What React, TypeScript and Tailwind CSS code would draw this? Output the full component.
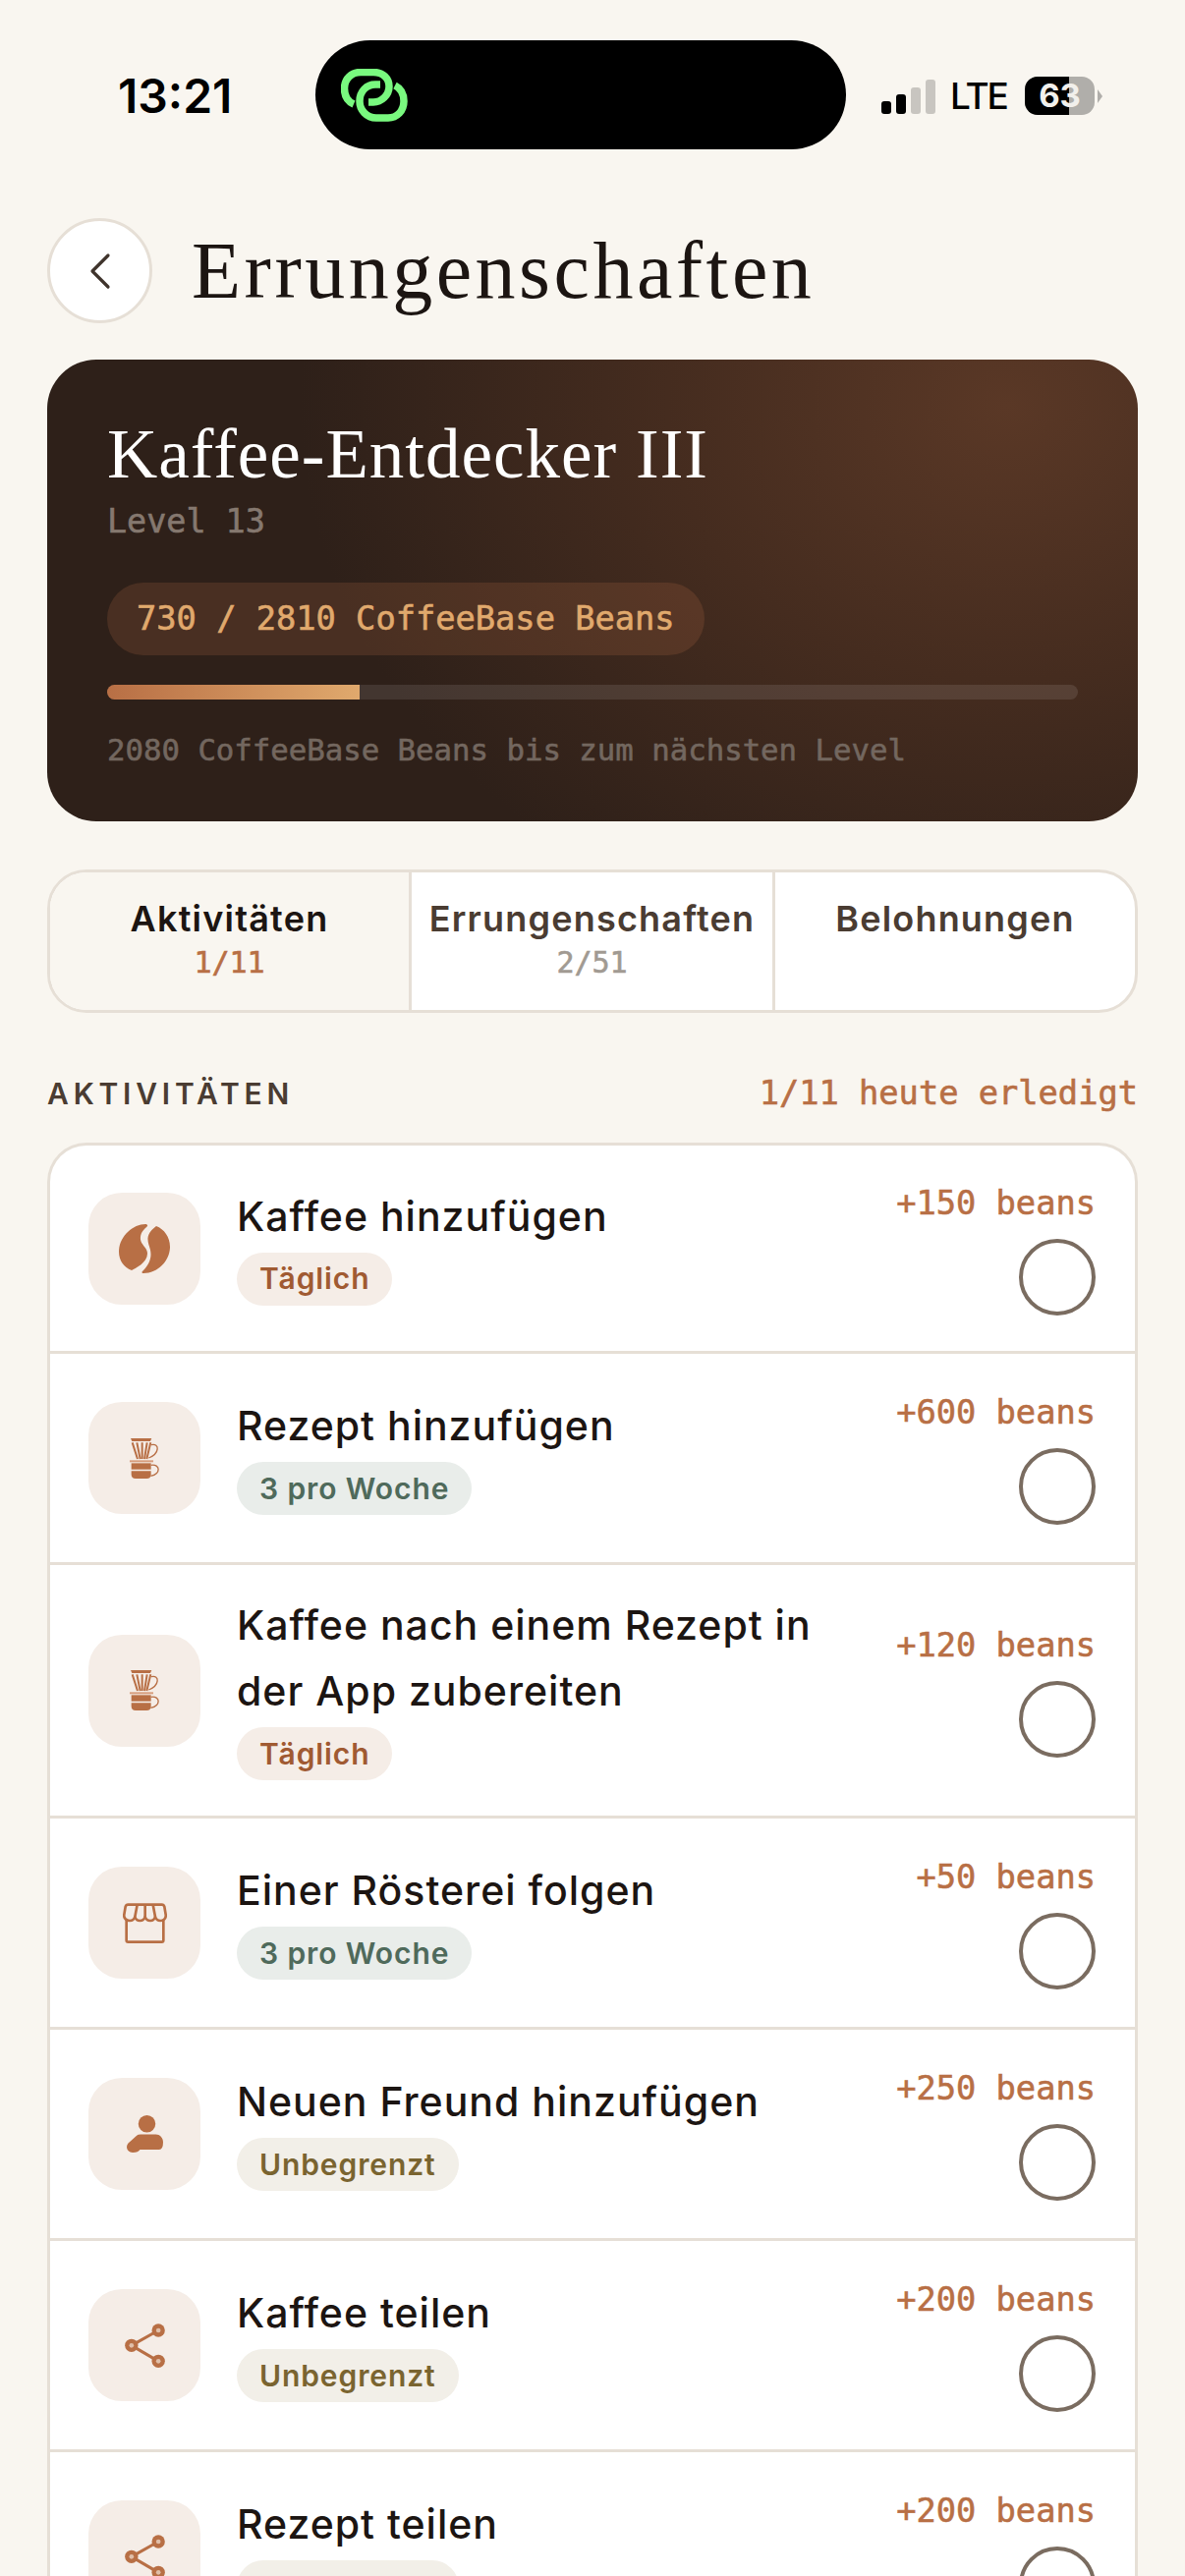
import { ChevronLeft } from 'lucide-react';
import type { ReactNode } from 'react';

const mono = "font-['DejaVu_Sans_Mono','Liberation_Mono',monospace] [-webkit-text-stroke:0.6px]";

const BeanIcon = () => (
  <svg width="52" height="52" viewBox="0 0 52 52" fill="#b86f45">
    <path d="M27 1C14 1 0 14 0 29C0 38 5 45 13 48C17 46 29 40 29 31C29 24 21 22 22 14C22.500 9 26 6 29 3C29.500 2 28.500 1 27 1Z" />
    <path d="M38 3C46 6 52 14 52 24C52 38 40 51 25 51C23.500 51 23 50 24 49C28 45 32.500 39 32.500 32C32.500 25 29 21 29.500 15C30 10 34 6 38 3Z" />
  </svg>
);

const CupIcon = () => (
  <svg width="30" height="41" viewBox="0 0 90 123" fill="none" stroke="#b86f45">
    <path d="M3 0H67L63 9H7Z" fill="#b86f45" stroke="none" />
    <path d="M8 13L24 63M22 13L32 63M38 13L38 63M53 13L45 63M64 13L52 63" strokeWidth="6" />
    <path d="M66 20C92 14 92 46 58 60" strokeWidth="4" />
    <rect x="0" y="67" width="72" height="6" fill="#d79d7d" stroke="none" />
    <path d="M5 76H65V95H5Z" fill="#b86f45" stroke="none" />
    <path d="M5 100H65V110C65 118 60 123 52 123H18C10 123 5 118 5 110Z" fill="#b86f45" stroke="none" />
    <path d="M65 82C94 78 96 108 64 115" strokeWidth="4" />
  </svg>
);

const StoreIcon = () => (
  <svg width="45" height="41" viewBox="0 0 135 123" fill="none" stroke="#b86f45" strokeWidth="8" strokeLinejoin="round">
    <path d="M11 50V114Q11 119 16 119H119Q124 119 124 114V50" />
    <path d="M16 5H119Q125 5 127 11L131 35C133 47 124 54 115 54C107 54 101 49 99 42C97 49 91 54 84 54C76 54 70 49 68 42C66 49 60 54 52 54C45 54 39 49 37 42C35 49 29 54 21 54C11 54 2 46 4 35L8 11Q10 5 16 5Z" />
    <path d="M44 5L37 42M68 5V42M92 5L99 42" />
  </svg>
);

const PersonIcon = () => (
  <svg width="37" height="38" viewBox="0 0 110 113" fill="#b86f45">
    <circle cx="61" cy="26" r="26" />
    <path d="M30 62Q34 58 42 58H88C100 58 110 68 110 82Q110 104 98 104H40C36 110 30 113 18 113C8 113 0 105 0 96C0 88 6 82 12 78Z" />
  </svg>
);

const ShareIcon = () => (
  <svg width="41" height="45" viewBox="0 0 122 135" fill="#b86f45" stroke="none">
    <path d="M20 67L102 21M20 67L102 115" stroke="#b86f45" strokeWidth="9" />
    <circle cx="20" cy="67" r="20" />
    <circle cx="102" cy="21" r="20" />
    <circle cx="102" cy="115" r="20" />
    <circle cx="20" cy="67" r="7" fill="#e0bfa9" />
    <circle cx="102" cy="21" r="7" fill="#e0bfa9" />
    <circle cx="102" cy="115" r="7" fill="#e0bfa9" />
  </svg>
);

const LinkIcon = () => (
  <svg width="68" height="54" viewBox="0 0 68 54" fill="none" stroke="#79f97f" strokeWidth="7.500">
    <path d="M13 36C6 33 3.500 27 3.500 20C3.500 10 11 3.500 20 3.500H33C43 3.500 49 10 49 18C49 27 41 34 33 34H28" />
    <path d="M40 16H35C26 16 19 23 19 33C19 42 26 50 36 50H48C57 50 64 43 64 33C64 26 61 20 55 17" />
  </svg>
);

function Badge({ kind }: { kind: 'daily' | 'week' | 'free' }) {
  if (kind === 'daily') {
    return (
      <span className="w-fit h-[54px] flex items-center rounded-full bg-[#f5ede7] px-[23px] text-[30px] font-semibold tracking-[0.900px] text-[#a05a32]">
        Täglich
      </span>
    );
  }
  if (kind === 'week') {
    return (
      <span className="w-fit h-[54px] flex items-center rounded-full bg-[#e9edea] px-[23px] text-[30px] font-semibold tracking-[0.900px] text-[#4f6a5b]">
        3 pro Woche
      </span>
    );
  }
  return (
    <span className="w-fit h-[54px] flex items-center rounded-full bg-[#f2efe8] px-[23px] text-[30px] font-semibold tracking-[0.900px] text-[#7a6430]">
      Unbegrenzt
    </span>
  );
}

function Row({
  icon,
  title,
  beans,
  badge,
  rowClass,
}: {
  icon: ReactNode;
  title: ReactNode;
  beans: string;
  badge: 'daily' | 'week' | 'free';
  rowClass: string;
}) {
  return (
    <div className={`flex items-center border-b-[3px] border-[#e6dfd6] pl-[39px] pr-10 ${rowClass}`}>
      <div className="w-[114px] h-[114px] shrink-0 rounded-[34px] bg-[#f5ede7] flex items-center justify-center">
        {icon}
      </div>
      <div className="ml-[37px] flex-1 flex flex-col pb-[8px]">
        <div className="text-[41px] leading-[67px] tracking-[1px] font-medium text-[#1c1512]">{title}</div>
        <div className="mt-[3px]">
          <Badge kind={badge} />
        </div>
      </div>
      <div className="self-stretch flex flex-col items-end justify-center">
        <div className={`${mono} text-[33.700px] leading-[44px] text-[#b86f45]`}>{beans}</div>
        <div className="mt-[14px] w-[78px] h-[78px] rounded-full border-[4px] border-[#7a6c60]" />
      </div>
    </div>
  );
}

export default function App() {
  return (
    <div className="w-[1206px] h-[2622px] overflow-hidden bg-[#f9f6f0] font-['Inter',sans-serif]">
      {/* status bar */}
      <div className="h-[152px] pt-[41px] flex items-start">
        <div className="w-[321px] h-[111px] flex items-center pl-[120px] pt-[2px] text-[48px] font-semibold text-black">13:21</div>
        <div className="w-[540px] h-[111px] rounded-[56px] bg-black flex items-center pl-[26px]">
          <LinkIcon />
        </div>
        <div className="h-[111px] flex items-center pl-[36px] pt-[2px]">
          <div className="flex items-end gap-[5px] h-[36px]">
            <div className="w-[10px] h-[13px] rounded-[3px] bg-black" />
            <div className="w-[10px] h-[20px] rounded-[3px] bg-black" />
            <div className="w-[10px] h-[27px] rounded-[3px] bg-[#c8c5c0]" />
            <div className="w-[10px] h-[35px] rounded-[3px] bg-[#c8c5c0]" />
          </div>
          <span className="ml-[15px] w-[76px] text-[37px] leading-none tracking-[-2px] font-medium text-black">LTE</span>
          <div className="relative w-[71px] h-[39px] rounded-[13px] overflow-hidden bg-[#b0aeaa] flex items-center justify-center">
            <div className="absolute inset-y-0 left-0 w-[45px] bg-black" />
            <span className="relative text-[33px] leading-none font-bold text-[#f2f0ec]">63</span>
          </div>
          <div className="ml-[3px] w-0 h-0 border-y-[7px] border-y-transparent border-l-[5px] border-l-[#b0aeaa]" />
        </div>
      </div>

      <div className="px-[48px]">
        {/* header */}
        <div className="mt-[70px] flex items-center h-[107px]">
          <button className="w-[107px] h-[107px] rounded-full bg-white border-[3px] border-[#e6dfd6] flex items-center justify-center">
            <ChevronLeft size={64} strokeWidth={1.2} color="#3f342c" />
          </button>
          <h1 className="ml-[40px] font-['Liberation_Serif',serif] text-[82px] leading-none tracking-[3.500px] text-[#1c1512]">
            Errungenschaften
          </h1>
        </div>

        {/* level card */}
        <div className="mt-[37px] h-[470px] rounded-[50px] bg-[radial-gradient(ellipse_720px_580px_at_88%_10%,#5a3826_0%,#452c1f_48%,#2e2019_100%)] px-[61px] pt-[58px]">
          <div className="font-['Liberation_Serif',serif] text-[71px] leading-[76px] tracking-[1px] text-white">Kaffee-Entdecker III</div>
          <div className={`${mono} mt-[11px] text-[33.400px] leading-[40px] text-[#85786f]`}>Level 13</div>
          <div className={`${mono} mt-[42px] w-fit h-[74px] flex items-center rounded-full bg-[#b86f45]/20 px-[30px] text-[33.700px] text-[#e0a96d]`}>
            730 / 2810 CoffeeBase Beans
          </div>
          <div className="mt-[30px] h-[15px] rounded-full bg-white/10 overflow-hidden">
            <div className="h-full w-[26%] bg-gradient-to-r from-[#b86f45] to-[#e0a96d]" />
          </div>
          <div className={`${mono} mt-[32px] text-[30.700px] leading-[40px] text-[#73675f]`}>
            2080 CoffeeBase Beans bis zum nächsten Level
          </div>
        </div>

        {/* tabs */}
        <div className="mt-[49px] h-[146px] rounded-[40px] border-[3px] border-[#e6dfd6] bg-white overflow-hidden grid grid-cols-[368px_370px_1fr]">
          <div className="bg-[#f9f6f0] border-r-[3px] border-[#e6dfd6] flex flex-col items-center pt-[24px]">
            <span className="text-[36px] leading-[46px] tracking-[1.200px] font-semibold text-[#1c1512]">Aktivitäten</span>
            <span className={`${mono} mt-[2px] text-[30px] leading-[40px] text-[#b86f45]`}>1/11</span>
          </div>
          <div className="border-r-[3px] border-[#e6dfd6] flex flex-col items-center pt-[24px]">
            <span className="text-[36px] leading-[46px] tracking-[1.200px] font-semibold text-[#4a3c32]">Errungenschaften</span>
            <span className={`${mono} mt-[2px] text-[30px] leading-[40px] text-[#a19a92]`}>2/51</span>
          </div>
          <div className="flex flex-col items-center pt-[24px]">
            <span className="text-[36px] leading-[46px] tracking-[1.200px] font-semibold text-[#4a3c32]">Belohnungen</span>
          </div>
        </div>

        {/* section heading */}
        <div className="mt-[57px] h-[50px] flex items-center justify-between">
          <span className="text-[30px] font-semibold tracking-[4.800px] text-[#4a3c32]">AKTIVITÄTEN</span>
          <span className={`${mono} text-[33.700px] text-[#b86f45]`}>1/11 heute erledigt</span>
        </div>

        {/* list */}
        <div className="mt-[25px] rounded-t-[40px] border-x-[3px] border-t-[3px] border-[#e6dfd6] bg-white overflow-hidden">
          <Row icon={<BeanIcon />} title="Kaffee hinzufügen" beans="+150 beans" badge="daily" rowClass="h-[212px]" />
          <Row icon={<CupIcon />} title="Rezept hinzufügen" beans="+600 beans" badge="week" rowClass="h-[215px]" />
          <Row
            icon={<CupIcon />}
            title={<>Kaffee nach einem Rezept in<br />der App zubereiten</>}
            beans="+120 beans"
            badge="daily"
            rowClass="h-[258px]"
          />
          <Row icon={<StoreIcon />} title="Einer Rösterei folgen" beans="+50 beans" badge="week" rowClass="h-[215px]" />
          <Row icon={<PersonIcon />} title="Neuen Freund hinzufügen" beans="+250 beans" badge="free" rowClass="h-[215px]" />
          <Row icon={<ShareIcon />} title="Kaffee teilen" beans="+200 beans" badge="free" rowClass="h-[215px]" />
          <Row icon={<ShareIcon />} title="Rezept teilen" beans="+200 beans" badge="free" rowClass="h-[215px]" />
        </div>
      </div>
    </div>
  );
}
